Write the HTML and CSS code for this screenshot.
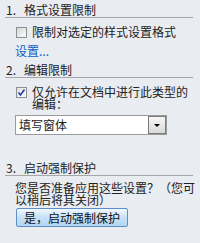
FILE: index.html
```html
<!DOCTYPE html>
<html lang="zh-CN">
<head>
  <meta charset="UTF-8" />
  <title>限制格式和编辑</title>
  <link rel="stylesheet" href="styles.css">
</head>
<body>
  <div class="section-title"><span class="num">1.</span>格式设置限制</div>
  <label class="check-row">
    <span class="box"></span>
    <span>限制对选定的样式设置格式</span>
  </label>
  <a class="link" href="#">设置...</a>

  <div class="section-title second"><span class="num">2.</span>编辑限制</div>
  <label class="check-row tight">
    <span class="box checked">
      <svg width="9" height="9" viewBox="0 0 9 9"><path d="M1.5 4.5 L3.5 7 L7.5 1.5" fill="none" stroke="#1f3fae" stroke-width="1.6"/></svg>
    </span>
    <span>仅允许在文档中进行此类型的<br>编辑：</span>
  </label>
  <div class="dropdown">
    <span class="value">填写窗体</span>
    <span class="arrow-btn"><span class="arrow"></span></span>
  </div>

  <div class="section-title third"><span class="num">3.</span>启动强制保护</div>
  <p class="note">您是否准备应用这些设置？（您可<br>以稍后将其关闭）</p>
  <button class="protect-btn">是，启动强制保护</button>
</body>
</html>
```

FILE: styles.css
```css
body {
    margin: 0;
    padding: 3px 0 0 0;
    width: 200px;
    height: 243px;
    background-color: #e9ecf1;
    font-family: "Noto Sans CJK SC", "Liberation Sans", sans-serif;
    font-size: 12px;
    color: #222;
    box-sizing: border-box;
}
.section-title {
    margin: 0 7px 0 5px;
    padding-left: 1px;
    line-height: 14px;
    border-bottom: 1px solid #a6a6a6;
}
.section-title .num {
    display: inline-block;
    width: 18px;
}
.section-title.second {
    margin-top: 5px;
}
.section-title.third {
    margin-top: 26px;
}
.check-row {
    display: flex;
    align-items: flex-start;
    gap: 5px;
    margin: 7px 0 0 16px;
    line-height: 14px;
}
.check-row.tight {
    margin-top: 8px;
    line-height: 12px;
}
.box {
    flex: none;
    width: 9px;
    height: 9px;
    margin-top: 2px;
    border: 1px solid #8f8f8f;
    background: linear-gradient(135deg, #d6d6d6, #fbfbfb);
    display: flex;
    align-items: center;
    justify-content: center;
}
.box.checked {
    margin-top: 1px;
    background: linear-gradient(135deg, #e0e0e0, #ffffff);
}
.link {
    display: block;
    margin: 5px 0 0 15px;
    line-height: 14px;
    color: #0a5fc4;
    text-decoration: none;
}
.dropdown {
    display: flex;
    align-items: center;
    justify-content: space-between;
    width: 150px;
    height: 18px;
    margin: 5px 0 0 15px;
    background-color: #fff;
    border: 1px solid #9a9a9a;
}
.dropdown .value {
    padding-left: 3px;
    line-height: 18px;
}
.arrow-btn {
    width: 16px;
    height: 16px;
    border: 1px solid #7b7b7b;
    background: linear-gradient(#f6f6f6, #d9d9d9);
    display: flex;
    align-items: center;
    justify-content: center;
}
.arrow {
    width: 0;
    height: 0;
    border-left: 3px solid transparent;
    border-right: 3px solid transparent;
    border-top: 3px solid #000;
}
.note {
    margin: 6px 0 0 15px;
    line-height: 12px;
}
.protect-btn {
    display: block;
    margin: 2px 0 0 16px;
    width: 112px;
    height: 19px;
    padding: 0;
    border: 1px solid #5d8fc4;
    border-radius: 2px;
    background: linear-gradient(#f2f8fe, #c5e1f8 50%, #b2d6f5);
    font-family: "Noto Sans CJK SC", "Liberation Sans", sans-serif;
    font-size: 12px;
    color: #111;
    line-height: 17px;
}
```
